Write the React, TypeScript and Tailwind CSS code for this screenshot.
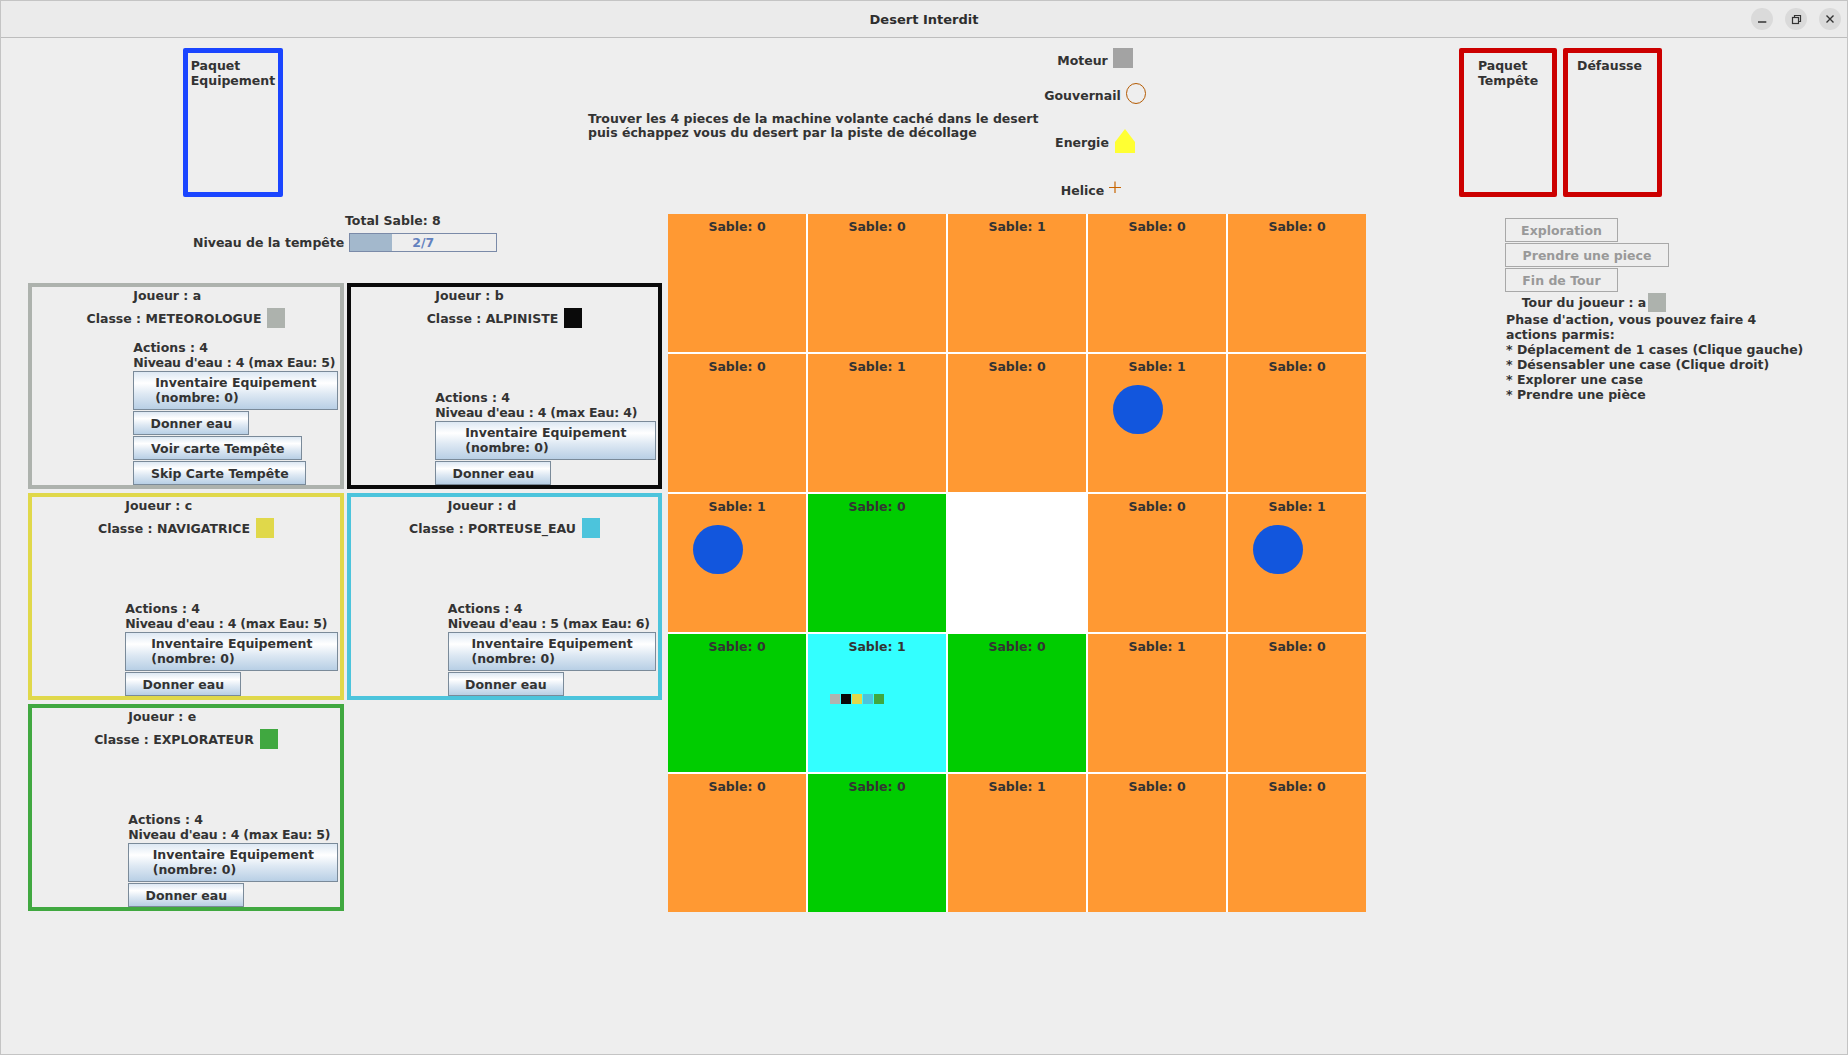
import React from "react";

const grad =
  "bg-[linear-gradient(to_bottom,#dde8f3_0%,#ffffff_30%,#dde8f3_60%,#b8cfe5_100%)] border border-[#7a8a99]";

type Player = {
  name: string;
  cls: string;
  border: string;
  sq: string;
  w: string;
  eau: string;
  extra?: boolean;
};

const players: Player[] = [
  { name: "a", cls: "METEOROLOGUE", border: "border-[#adb2ad]", sq: "bg-[#adb2ad]", w: "w-[205px]", eau: "4 (max Eau: 5)", extra: true },
  { name: "b", cls: "ALPINISTE", border: "border-[#0a0a0a]", sq: "bg-[#0a0a0a]", w: "w-[221px]", eau: "4 (max Eau: 4)" },
  { name: "c", cls: "NAVIGATRICE", border: "border-[#e0d84a]", sq: "bg-[#e0d84a]", w: "w-[213px]", eau: "4 (max Eau: 5)" },
  { name: "d", cls: "PORTEUSE_EAU", border: "border-[#4cc4dc]", sq: "bg-[#4cc4dc]", w: "w-[208.5px]", eau: "5 (max Eau: 6)" },
  { name: "e", cls: "EXPLORATEUR", border: "border-[#40a840]", sq: "bg-[#40a840]", w: "w-[210px]", eau: "4 (max Eau: 5)" },
];

function Panel({ p }: { p: Player }) {
  return (
    <div className={`flex flex-col border-4 ${p.border} pt-[1.5px] whitespace-nowrap`}>
      <div className={`self-end mr-[1.7px] ${p.w} leading-[14.5px]`}>Joueur : {p.name}</div>
      <div className="mt-[5px] flex items-center justify-center gap-[6px]">
        <span>Classe : {p.cls}</span>
        <span className={`w-[18px] h-[20px] ${p.sq}`} />
      </div>
      <div className={`mt-auto self-end mr-[1.7px] ${p.w} flex flex-col items-start`}>
        <div className="leading-[14.5px]">Actions : 4</div>
        <div className="leading-[14.5px] tracking-[-0.2px]">Niveau d'eau : {p.eau}</div>
        <div className={`mt-px h-[39px] w-full ${grad} flex items-center justify-center`}>
          <div className="text-left leading-[14.3px]">
            <div>Inventaire Equipement</div>
            <div>(nombre: 0)</div>
          </div>
        </div>
        <div className={`mt-px h-[24px] w-[116px] ${grad} flex items-center justify-center`}>Donner eau</div>
        {p.extra && (
          <>
            <div className={`mt-px h-[24px] w-[169px] ${grad} flex items-center justify-center`}>Voir carte Tempête</div>
            <div className={`mt-px h-[24px] w-[173px] ${grad} flex items-center justify-center`}>Skip Carte Tempête</div>
          </>
        )}
      </div>
    </div>
  );
}

type Cell = { c: string; s?: number; circle?: boolean; pl?: boolean };

const O = "bg-[#ff9933]";
const G = "bg-[#00cc00]";
const C = "bg-[#33ffff]";
const W = "bg-[#ffffff]";

const board: Cell[][] = [
  [{ c: O, s: 0 }, { c: O, s: 0 }, { c: O, s: 1 }, { c: O, s: 0 }, { c: O, s: 0 }],
  [{ c: O, s: 0 }, { c: O, s: 1 }, { c: O, s: 0 }, { c: O, s: 1, circle: true }, { c: O, s: 0 }],
  [{ c: O, s: 1, circle: true }, { c: G, s: 0 }, { c: W }, { c: O, s: 0 }, { c: O, s: 1, circle: true }],
  [{ c: G, s: 0 }, { c: C, s: 1, pl: true }, { c: G, s: 0 }, { c: O, s: 1 }, { c: O, s: 0 }],
  [{ c: O, s: 0 }, { c: G, s: 0 }, { c: O, s: 1 }, { c: O, s: 0 }, { c: O, s: 0 }],
];

const disBtn =
  "h-[24px] border border-[#a8a8a8] text-[#999999] flex items-center justify-center";

export default function App() {
  return (
    <div className="w-[1848px] h-[1055px] overflow-hidden border border-[#c4c4c4] bg-[#eeeeee] flex flex-col font-['DejaVu_Sans',sans-serif] font-bold text-[12.5px] leading-[15px] text-[#333333]">
      {/* title bar */}
      <div className="h-[37px] shrink-0 border-b border-[#bdbdbd] bg-[#ebebeb] grid grid-cols-[1fr_auto_1fr] items-center">
        <div />
        <div className="text-[13px] text-[#2e2e2e]">Desert Interdit</div>
        <div className="justify-self-end mr-[6px] flex gap-[12px]">
          <div className="w-[22px] h-[22px] rounded-full bg-[#dadada]">
            <svg width="22" height="22" viewBox="0 0 22 22">
              <line x1="7" y1="14" x2="15.3" y2="14" stroke="#333" strokeWidth="1.5" />
            </svg>
          </div>
          <div className="w-[22px] h-[22px] rounded-full bg-[#dadada]">
            <svg width="22" height="22" viewBox="0 0 22 22">
              <rect x="7.5" y="9.5" width="6" height="6" fill="none" stroke="#333" strokeWidth="1.2" />
              <path d="M9.5 9.5 V7.5 H15.5 V13.5 H13.5" fill="none" stroke="#333" strokeWidth="1.2" />
            </svg>
          </div>
          <div className="w-[22px] h-[22px] rounded-full bg-[#dadada]">
            <svg width="22" height="22" viewBox="0 0 22 22">
              <path d="M7.5 7.5 L14.5 14.5 M14.5 7.5 L7.5 14.5" stroke="#333" strokeWidth="1.4" />
            </svg>
          </div>
        </div>
      </div>

      {/* top band */}
      <div className="h-[162px] shrink-0 flex items-start whitespace-nowrap">
        <div className="ml-[182px] mt-[10px] w-[100px] h-[149px] border-[5px] border-[#1a45ff] rounded-[2px] flex flex-col items-center pt-[5px]">
          <div className="text-left">
            <div>Paquet</div>
            <div>Equipement</div>
          </div>
        </div>
        <div className="ml-[305px] mt-[74px] w-[452px] leading-[14px]">
          <div>Trouver les 4 pieces de la machine volante caché dans le desert</div>
          <div>puis échappez vous du desert par la piste de décollage</div>
        </div>
        <div className="w-[110px] flex flex-col items-center">
          <div className="mt-[10px] h-[20px] flex items-center gap-[5px]">
            <span className="mt-[4px]">Moteur</span>
            <span className="w-[20px] h-[20px] bg-[#a3a3a3]" />
          </div>
          <div className="mt-[15px] h-[21px] flex items-center gap-[5px]">
            <span className="mt-[3px]">Gouvernail</span>
            <svg width="20" height="21" viewBox="0 0 20 21">
              <ellipse cx="10" cy="10.5" rx="9.5" ry="10" fill="none" stroke="#b35900" strokeWidth="1" />
            </svg>
          </div>
          <div className="mt-[25px] h-[24px] flex items-center gap-[6px]">
            <span className="mt-[3px]">Energie</span>
            <svg width="20" height="24" viewBox="0 0 20 24">
              <polygon points="10,0 20,13 20,24 0,24 0,13" fill="#ffff33" />
            </svg>
          </div>
          <div className="mt-[28px] h-[14px] flex items-center gap-[5px]">
            <span className="mt-[4px]">Helice</span>
            <svg width="20" height="14" viewBox="0 0 20 14">
              <path d="M0 6.5 H12 M6 0.5 V12" stroke="#c86400" strokeWidth="1.2" fill="none" />
            </svg>
          </div>
        </div>
        <div className="ml-[309px] mt-[10px] w-[98px] h-[149px] border-[5px] border-[#cc0000] rounded-[2px] flex flex-col items-center pt-[5px]">
          <div className="text-left">
            <div>Paquet</div>
            <div>Tempête</div>
          </div>
        </div>
        <div className="ml-[6px] mt-[10px] w-[99px] h-[149px] border-[5px] border-[#cc0000] rounded-[2px] flex flex-col items-start pl-[9px] pt-[5px]">
          <div>Défausse</div>
        </div>
      </div>

      {/* bottom band */}
      <div className="flex items-start whitespace-nowrap">
        {/* left column */}
        <div className="w-[661px] shrink-0 flex flex-col items-start">
          <div className="ml-[344px] mt-[12.5px]">Total Sable: 8</div>
          <div className="ml-[192px] mt-[5.5px] h-[19px] flex items-center">
            <span>Niveau de la tempête</span>
            <div className="ml-[5px] w-[148px] h-[19px] border border-[#7a8aa8] bg-[#eeeeee] relative flex">
              <div className="w-[42px] h-full bg-[#a3b8cc]" />
              <div className="absolute inset-0 flex items-center justify-center text-[#6382bf]">2/7</div>
            </div>
          </div>
          <div className="ml-[27px] mt-[31px] grid grid-cols-[316px_315px] grid-rows-[206px_207px_207px] gap-x-[3px] gap-y-[4px]">
            {players.map((p) => (
              <Panel key={p.name} p={p} />
            ))}
          </div>
        </div>

        {/* board */}
        <div className="ml-[6px] mt-[14px] grid grid-cols-[repeat(5,138px)] grid-rows-[repeat(5,138px)] gap-[2px] bg-[#ffffff]">
          {board.flat().map((cell, i) => (
            <div key={i} className={`relative ${cell.c} pt-[4.8px] text-center`}>
              {cell.s !== undefined && <div>Sable: {cell.s}</div>}
              {cell.circle && (
                <div className="absolute left-[25px] top-[31px] w-[50px] h-[49px] rounded-full bg-[#1256dd]" />
              )}
              {cell.pl && (
                <div className="absolute left-[22px] top-[60px] flex gap-px">
                  <span className="w-[10px] h-[10px] bg-[#b0b4b0]" />
                  <span className="w-[10px] h-[10px] bg-[#0a0a0a]" />
                  <span className="w-[10px] h-[10px] bg-[#e0d84a]" />
                  <span className="w-[10px] h-[10px] bg-[#4cc4dc]" />
                  <span className="w-[10px] h-[10px] bg-[#40a840]" />
                </div>
              )}
            </div>
          ))}
        </div>

        {/* right column */}
        <div className="ml-[139px] mt-[18px] flex flex-col items-start">
          <div className={`${disBtn} w-[113px]`}>Exploration</div>
          <div className={`${disBtn} mt-px w-[164px]`}>Prendre une piece</div>
          <div className={`${disBtn} mt-px w-[113px]`}>Fin de Tour</div>
          <div className="mt-px ml-[16.7px] flex items-center gap-[2px]">
            <span>Tour du joueur : a</span>
            <span className="w-[18px] h-[19px] bg-[#adb2ad]" />
          </div>
          <div className="ml-px">
            <div>Phase d'action, vous pouvez faire 4</div>
            <div>actions parmis:</div>
            <div>* Déplacement de 1 cases (Clique gauche)</div>
            <div>* Désensabler une case (Clique droit)</div>
            <div>* Explorer une case</div>
            <div>* Prendre une pièce</div>
          </div>
        </div>
      </div>
    </div>
  );
}
